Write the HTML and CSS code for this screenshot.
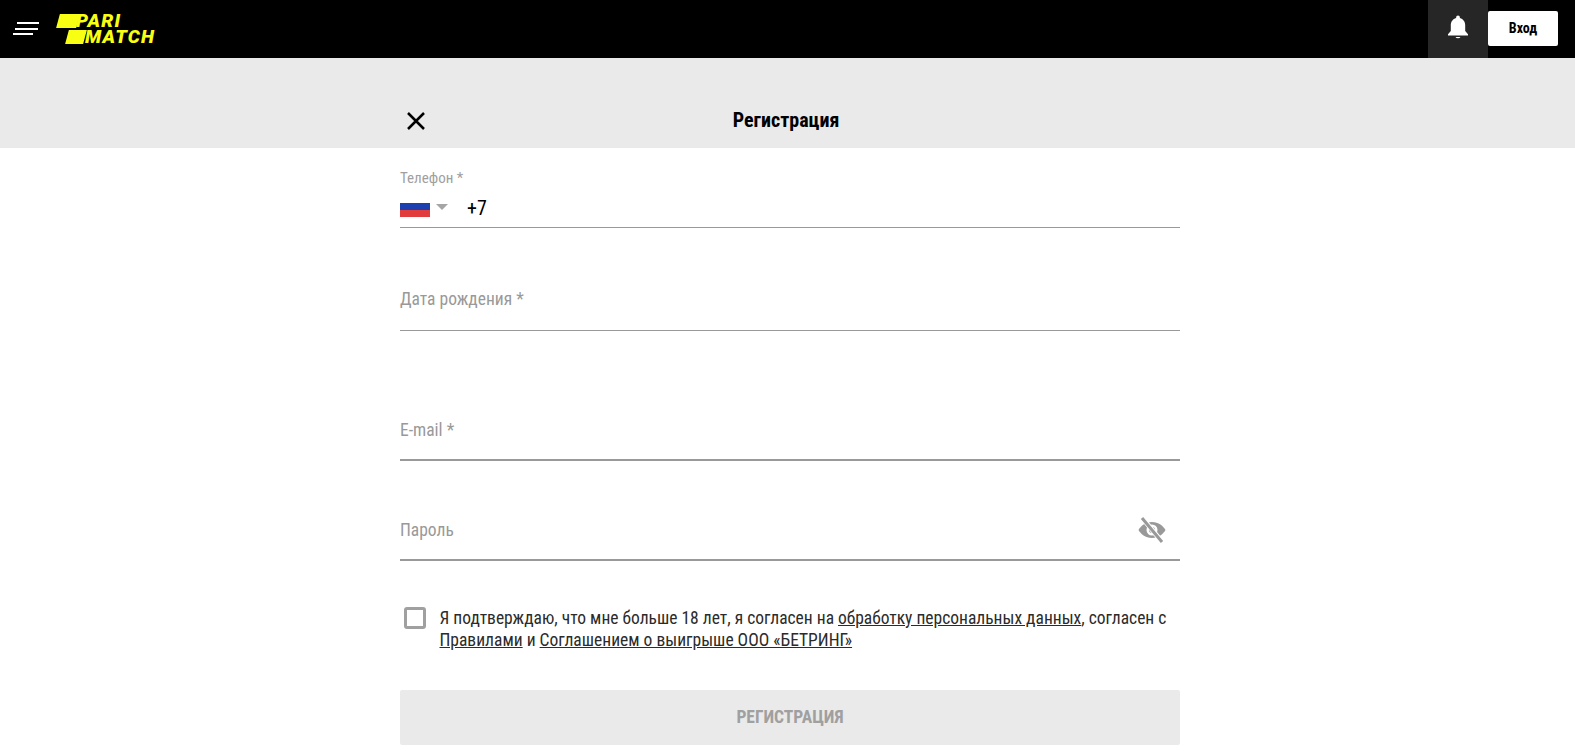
FILE: index.html
```html
<!DOCTYPE html>
<html lang="ru">
<head>
<meta charset="utf-8">
<title>Регистрация</title>
<link rel="stylesheet" href="styles.css">
</head>
<body>
<header class="topbar">
  <div class="topbar-left">
    <div class="burger"><span class="b1"></span><span class="b2"></span><span class="b3"></span></div>
    <div class="logo">
      <div class="logo-row logo-row1"><i class="logo-slab"></i><span>PARI</span></div>
      <div class="logo-row logo-row2"><i class="logo-slab logo-slab2"></i><span>MATCH</span></div>
    </div>
  </div>
  <div class="topbar-right">
    <div class="bell">
      <svg width="24" height="26" viewBox="0 0 24 26"><path fill="#fff" d="M12 1.500a1.900 1.900 0 0 0-1.900 1.900v.7C6.900 5 4.800 7.800 4.800 11.300v5.600L2 20.300v1.200h20v-1.200l-2.800-3.400v-5.600c0-3.500-2.100-6.300-5.300-7.200v-.7A1.900 1.900 0 0 0 12 1.500zM9.500 23a2.700 2.200 0 0 0 5 0z"/></svg>
    </div>
    <button class="login">Вход</button>
  </div>
</header>
<section class="band">
  <div class="band-inner">
    <svg class="close" width="22" height="22" viewBox="0 0 22 22"><path d="M3 3l16 16M19 3L3 19" stroke="#000" stroke-width="2.500" fill="none"/></svg>
    <h1 class="title">Регистрация</h1>
  </div>
</section>
<main class="form">
  <div class="field field-phone">
    <div class="small-label">Телефон *</div>
    <div class="phone-row">
      <div class="flag"><i class="f-w"></i><i class="f-b"></i><i class="f-r"></i></div>
      <i class="caret"></i>
      <span class="phone-code">+7</span>
    </div>
  </div>
  <div class="field field-date"><span class="label">Дата рождения *</span></div>
  <div class="field field-email"><span class="label">E-mail *</span></div>
  <div class="field field-pass">
    <span class="label">Пароль</span>
    <svg class="eye" width="30" height="26" viewBox="0 0 30 26"><path fill="#999" d="M15 5C8.500 5 3.500 9.200 1.500 13c2 3.800 7 8 13.500 8s11.500-4.200 13.500-8C26.500 9.200 21.500 5 15 5zm0 13.500a5.500 5.500 0 1 1 0-11 5.500 5.500 0 0 1 0 11z"/><circle cx="15" cy="13" r="3" fill="#999"/><path stroke="#fff" stroke-width="5" d="M6.500 2.500l20 24"/><path stroke="#999" stroke-width="3" d="M5 1l20 24"/></svg>
  </div>
  <div class="consent">
    <i class="checkbox"></i>
    <p class="consent-text">Я подтверждаю, что мне больше 18 лет, я согласен на <a href="#">обработку персональных данных</a>, согласен с <a href="#">Правилами</a> и <a href="#">Соглашением о выигрыше ООО «БЕТРИНГ»</a></p>
  </div>
  <button class="submit">РЕГИСТРАЦИЯ</button>
</main>
</body>
</html>
```
FILE: styles.css
```css
* { box-sizing: border-box; }
html, body { margin: 0; padding: 0; height: 751px; overflow: hidden; }
body { background: #fff; font-family: Roboto, "Liberation Sans", sans-serif; font-stretch: 75%; color: #222; }
.topbar { height: 58px; background: #000; display: flex; justify-content: space-between; }
.topbar-left { display: flex; align-items: center; }
.burger { width: 26px; margin-left: 13px; display: flex; flex-direction: column; gap: 3.500px; align-items: flex-start; margin-top: -1px; }
.burger span { display: block; height: 2px; background: #fff; }
.b1 { width: 22px; margin-left: 4px; }
.b2 { width: 23px; margin-left: 2px; }
.b3 { width: 20px; }
.logo { margin-left: 18px; width: 110px; font-family: Roboto, sans-serif; font-stretch: 100%; font-weight: 900; font-style: italic; color: #f8ff13; font-size: 19px; line-height: 16px; margin-top: -1px; }
.logo-row { display: flex; align-items: center; letter-spacing: 1.200px; }
.logo-row1 { margin-left: 1px; }
.logo-row1 span { margin-left: -2px; }
.logo-row2 { margin-left: 10px; margin-top: 0; }
.logo-slab { display: block; width: 20px; height: 14px; background: #f8ff13; transform: skewX(-15deg); flex: none; }
.logo-slab2 { width: 18px; }
.topbar-right { display: flex; align-items: stretch; }
.bell { width: 60px; background: #262626; display: flex; align-items: center; justify-content: center; padding-bottom: 4px; }
.login { width: 70px; height: 35px; margin: 11px 17px 0 0; border: 0; border-radius: 2px; background: #fff; color: #000; font: inherit; font-stretch: 75%; font-weight: 700; font-size: 14px; padding: 0 0 2px; }
.band { height: 90px; background: #eaeaea; }
.band-inner { width: 780px; margin-left: 400px; height: 100%; position: relative; display: flex; justify-content: center; align-items: flex-end; padding-bottom: 16px; }
.close { position: absolute; left: 5px; bottom: 16px; }
.title { margin: 0 0 0 -8px; font-size: 20px; line-height: 24px; font-weight: 700; color: #000; }
.form { width: 780px; margin-left: 400px; }
.field { position: relative; border-bottom: 1px solid #999; }
.small-label { font-size: 15px; line-height: 16px; color: #a0a0a0; }
.field-phone { height: 80px; padding-top: 22px; }
.phone-row { display: flex; align-items: center; height: 30px; margin-top: 6px; }
.flag { width: 30px; height: 21px; display: flex; flex-direction: column; margin-top: -1px; }
.flag i { display: block; height: 7px; }
.f-w { background: #fff; }
.f-b { background: #1c3fb0; }
.f-r { background: #e23b3b; }
.caret { width: 0; height: 0; margin-left: 6px; border: 6px solid transparent; border-top: 6px solid #a5a5a5; border-bottom: 0; }
.phone-code { margin: 2px 0 0 19px; font-size: 20px; color: #000; }
.label { font-size: 17.500px; line-height: 22px; color: #999; display: block; }
.field-date { height: 103px; padding-top: 60px; }
.field-email { height: 130px; padding-top: 88px; border-bottom-width: 2px; }
.field-pass { height: 100px; padding-top: 58px; border-bottom-width: 2px; display: flex; justify-content: space-between; align-items: flex-start; }
.eye { margin: -2px 13px 0 0; }
.consent { display: flex; margin-top: 46px; }
.checkbox { width: 22px; height: 22px; margin: 0 0 0 4px; border: 3px solid #a0a0a0; border-radius: 3px; flex: none; }
.consent-text { margin: 0 0 0 13.500px; font-size: 17.500px; line-height: 22px; color: #2b2b2b; }
.consent-text a { color: inherit; text-decoration: underline; }
.submit { display: block; width: 100%; height: 55px; margin-top: 39px; border: 0; border-radius: 2px; background: #eaeaea; color: #a0a0a0; font: inherit; font-stretch: 75%; font-weight: 700; font-size: 17.500px; padding: 0 0 2px; }
```
